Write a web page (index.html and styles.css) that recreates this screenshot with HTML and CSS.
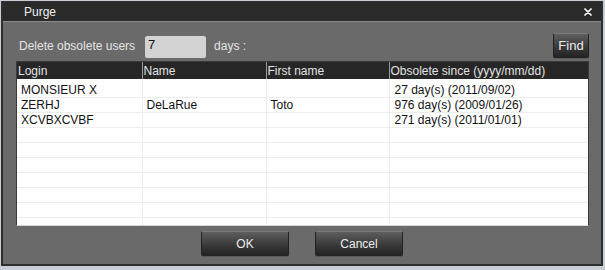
FILE: index.html
```html
<!DOCTYPE html>
<html lang="en">
<head>
    <meta charset="UTF-8">
    <title>Purge</title>
    <link rel="stylesheet" href="styles.css">
</head>
<body>

    <div class="dialog">
      <div class="frame">
        <!-- title bar -->
        <div class="titlebar">
          <span class="title">Purge</span>
          <svg class="close" width="8" height="8" viewBox="0 0 8 8">
            <path d="M1 1 L7 7 M7 1 L1 7" stroke="#fff" stroke-width="1.7" stroke-linecap="round"/>
          </svg>
        </div>

        <div class="content">
          <!-- filter row -->
          <div class="toolbar">
            <span class="label">Delete obsolete users</span>
            <div class="daysbox">7</div>
            <span class="label days">days :</span>
            <button class="btn find">Find</button>
          </div>

          <!-- user list -->
          <div class="grid">
            <table>
              <colgroup>
                <col style="width: 125px">
                <col style="width: 124px">
                <col style="width: 123px">
                <col>
              </colgroup>
              <thead>
                <tr>
                  <th>Login</th>
                  <th>Name</th>
                  <th>First name</th>
                  <th>Obsolete since (yyyy/mm/dd)</th>
                </tr>
              </thead>
              <tbody>
                <tr class="first">
                  <td>MONSIEUR X</td>
                  <td></td>
                  <td></td>
                  <td>27 day(s) (2011/09/02)</td>
                </tr>
                <tr>
                  <td>ZERHJ</td>
                  <td>DeLaRue</td>
                  <td>Toto</td>
                  <td>976 day(s) (2009/01/26)</td>
                </tr>
                <tr>
                  <td>XCVBXCVBF</td>
                  <td></td>
                  <td></td>
                  <td>271 day(s) (2011/01/01)</td>
                </tr>
                <tr><td></td><td></td><td></td><td></td></tr>
                <tr><td></td><td></td><td></td><td></td></tr>
                <tr><td></td><td></td><td></td><td></td></tr>
                <tr><td></td><td></td><td></td><td></td></tr>
                <tr><td></td><td></td><td></td><td></td></tr>
                <tr><td></td><td></td><td></td><td></td></tr>
                <tr><td></td><td></td><td></td><td></td></tr>
              </tbody>
            </table>
          </div>

          <!-- dialog buttons -->
          <div class="actions">
            <button class="btn big">OK</button>
            <button class="btn big">Cancel</button>
          </div>
        </div>
      </div>
    </div>

</body>
</html>
```

FILE: styles.css
```css
* {
  margin: 0;
  padding: 0;
  box-sizing: border-box;
}

body {
  width: 605px;
  height: 270px;
  background-color: #c9cdd4;
  font-family: "Liberation Sans", Arial, sans-serif;
  font-size: 12px;
  overflow: hidden;
}

.dialog {
  width: 605px;
  height: 270px;
  border: 1px solid #c9cdd4;
  border-right-width: 2px;
  border-bottom-width: 4px;
}

.frame {
  display: flex;
  flex-direction: column;
  height: 100%;
  background-color: #6a6a6a;
  border: 2px solid #2f2f2f;
  border-top-width: 1px;
}

.titlebar {
  display: flex;
  align-items: center;
  justify-content: space-between;
  height: 20px;
  padding: 0 9px 0 21px;
  background-color: #2a2a2a;
  border-bottom: 1px solid #8c8c8c;
  color: #f0f0f0;
}

.title {
  font-size: 12px;
}

.content {
  display: flex;
  flex-direction: column;
  flex: 1;
  padding: 11px 12px 8px 13px;
}

.toolbar {
  display: flex;
  align-items: center;
  height: 25px;
  padding-left: 3px;
}

.label {
  color: #e4e4e4;
}

.daysbox {
  width: 61px;
  height: 22px;
  margin: 2px 0 0 10px;
  padding: 1px 3px;
  background-color: #d3d3d3;
  border-radius: 2px;
  color: #111;
  font-size: 13px;
  line-height: 15px;
}

.days {
  margin-left: 8px;
  flex: 1;
}

.btn {
  all: unset;
  box-sizing: border-box;
  display: flex;
  align-items: center;
  justify-content: center;
  height: 25px;
  background-image: linear-gradient(#5e5e5e, #3a3a3a 55%, #232323);
  border: 1px solid #222;
  border-top-color: #7a7a7a;
  border-radius: 2px;
  box-shadow: 0 1px 0 #5a5a5a;
  color: #ececec;
  font-family: "Liberation Sans", Arial, sans-serif;
  font-size: 12px;
  cursor: pointer;
}

.find {
  width: 36px;
  font-size: 13px;
}

.grid {
  height: 165px;
  margin-top: 3px;
  background-color: #fff;
  border: 1px solid #3a3a3a;
  border-bottom-color: #d8d8d8;
  overflow: hidden;
}

table {
  width: 100%;
  table-layout: fixed;
  border-collapse: collapse;
}

th {
  height: 17px;
  padding: 0 0 0 1px;
  background-color: #262626;
  border-left: 1px solid #9a9a9a;
  color: #e2e2e2;
  font-weight: normal;
  text-align: left;
  white-space: nowrap;
}

th:first-child,
td:first-child {
  border-left: none;
}

td {
  height: 15px;
  padding: 0 0 0 4px;
  border-left: 1px solid #ebebeb;
  border-bottom: 1px solid #ededed;
  color: #111;
  line-height: 14px;
  white-space: nowrap;
}

.first td {
  height: 18px;
  padding-top: 4px;
}

td:last-child {
  padding-left: 5px;
}

.actions {
  display: flex;
  justify-content: center;
  gap: 26px;
  margin-top: 5px;
  padding-right: 1px;
}

.big {
  width: 88px;
}
```
